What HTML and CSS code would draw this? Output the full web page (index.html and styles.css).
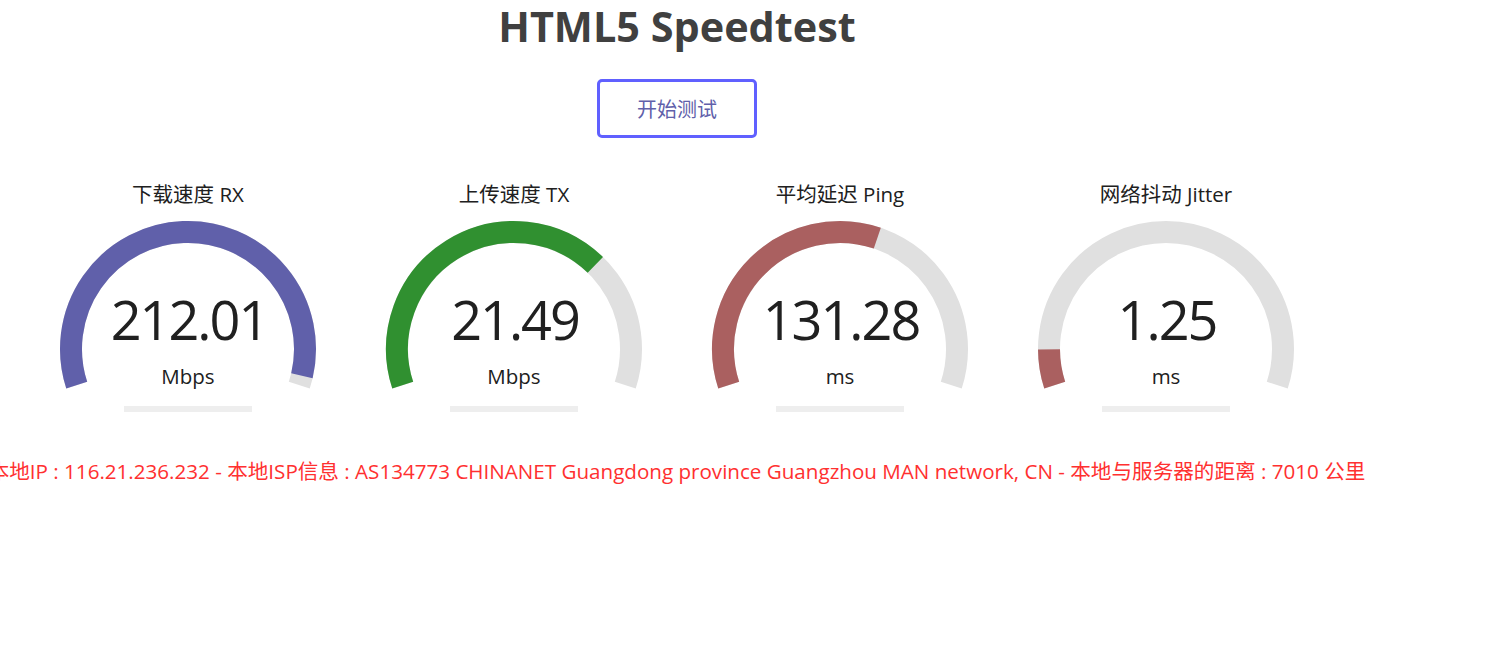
FILE: index.html
```html
<!DOCTYPE html>
<html lang="zh">
<head>
<meta charset="utf-8">
<title>HTML5 Speedtest</title>
<link rel="stylesheet" href="styles.css">
</head>
<body>
<div class="page">
  <h1 class="title">HTML5 Speedtest</h1>
  <div class="start-btn">开始测试</div>
  <div class="meters">
    <div class="test-area">
      <svg class="gauge" width="320" height="240" viewBox="0 0 320 240">
        <path class="track" d="M48.73 205.16 A117 117 0 1 1 271.27 205.16"/>
        <path class="fill fill-dl" d="M48.73 205.16 A117 117 0 1 1 273.91 195.72"/>
        <rect class="bar" x="96" y="226" width="128" height="6"/>
      </svg>
      <div class="test-name">下载速度 RX</div>
      <div class="meter-text">212.01</div>
      <div class="unit">Mbps</div>
    </div>
    <div class="test-area">
      <svg class="gauge" width="320" height="240" viewBox="0 0 320 240">
        <path class="track" d="M48.73 205.16 A117 117 0 1 1 271.27 205.16"/>
        <path class="fill fill-ul" d="M48.73 205.16 A117 117 0 0 1 241.34 84.9"/>
        <rect class="bar" x="96" y="226" width="128" height="6"/>
      </svg>
      <div class="test-name">上传速度 TX</div>
      <div class="meter-text">21.49</div>
      <div class="unit">Mbps</div>
    </div>
    <div class="test-area">
      <svg class="gauge" width="320" height="240" viewBox="0 0 320 240">
        <path class="track" d="M48.73 205.16 A117 117 0 1 1 271.27 205.16"/>
        <path class="fill fill-ping" d="M48.73 205.16 A117 117 0 0 1 197.32 58.1"/>
        <rect class="bar" x="96" y="226" width="128" height="6"/>
      </svg>
      <div class="test-name">平均延迟 Ping</div>
      <div class="meter-text">131.28</div>
      <div class="unit">ms</div>
    </div>
    <div class="test-area">
      <svg class="gauge" width="320" height="240" viewBox="0 0 320 240">
        <path class="track" d="M48.73 205.16 A117 117 0 1 1 271.27 205.16"/>
        <path class="fill fill-ping" d="M48.73 205.16 A117 117 0 0 1 43 169.4"/>
        <rect class="bar" x="96" y="226" width="128" height="6"/>
      </svg>
      <div class="test-name">网络抖动 Jitter</div>
      <div class="meter-text">1.25</div>
      <div class="unit">ms</div>
    </div>
  </div>
  <div class="ip-line"><span class="ip-text">本地IP : 116.21.236.232 - 本地ISP信息 : AS134773 CHINANET Guangdong province Guangzhou MAN network, CN - 本地与服务器的距离 : 7010 公里</span></div>
</div>
</body>
</html>
```
FILE: styles.css
```css
html, body {
  margin: 0;
  padding: 0;
  background: #ffffff;
}
body {
  font-family: "Open Sans", "Noto Sans CJK SC", sans-serif;
  color: #202020;
  overflow: hidden;
}
.page {
  width: 1354px;
  display: flex;
  flex-direction: column;
  align-items: center;
}
.title {
  margin: 2px 0 0;
  font-size: 41.4px;
  line-height: 49px;
  font-weight: 700;
  color: #404040;
}
.start-btn {
  margin-top: 28px;
  width: 160px;
  height: 59px;
  box-sizing: border-box;
  border: 3px solid #6060ff;
  border-radius: 5px;
  color: #6060aa;
  font-size: 20px;
  display: flex;
  align-items: center;
  justify-content: center;
}
.meters {
  margin-top: 42px;
  display: flex;
  gap: 6px;
}
.test-area {
  position: relative;
  width: 320px;
  height: 240px;
}
.gauge {
  display: block;
}
.track, .fill {
  fill: none;
  stroke-width: 22;
  stroke-linecap: butt;
}
.track { stroke: #e0e0e0; }
.fill-dl { stroke: #6060aa; }
.fill-ul { stroke: #309030; }
.fill-ping { stroke: #aa6060; }
.bar { fill: #eeeeee; }
.test-name {
  position: absolute;
  top: 1px;
  left: 0;
  width: 100%;
  text-align: center;
  font-size: 20.5px;
  line-height: 26px;
}
.meter-text {
  position: absolute;
  top: 112px;
  left: 0;
  width: 100%;
  text-align: center;
  font-size: 54px;
  line-height: 54px;
  letter-spacing: -2px;
  text-indent: 2px;
}
.unit {
  position: absolute;
  top: 183px;
  left: 0;
  width: 100%;
  text-align: center;
  font-size: 20.5px;
  line-height: 26px;
}
.ip-line {
  margin-top: 38px;
  width: 100%;
  display: flex;
  justify-content: center;
}
.ip-text {
  flex: none;
  white-space: nowrap;
  color: #ff3030;
  font-size: 20.6px;
  line-height: 26px;
}
```
